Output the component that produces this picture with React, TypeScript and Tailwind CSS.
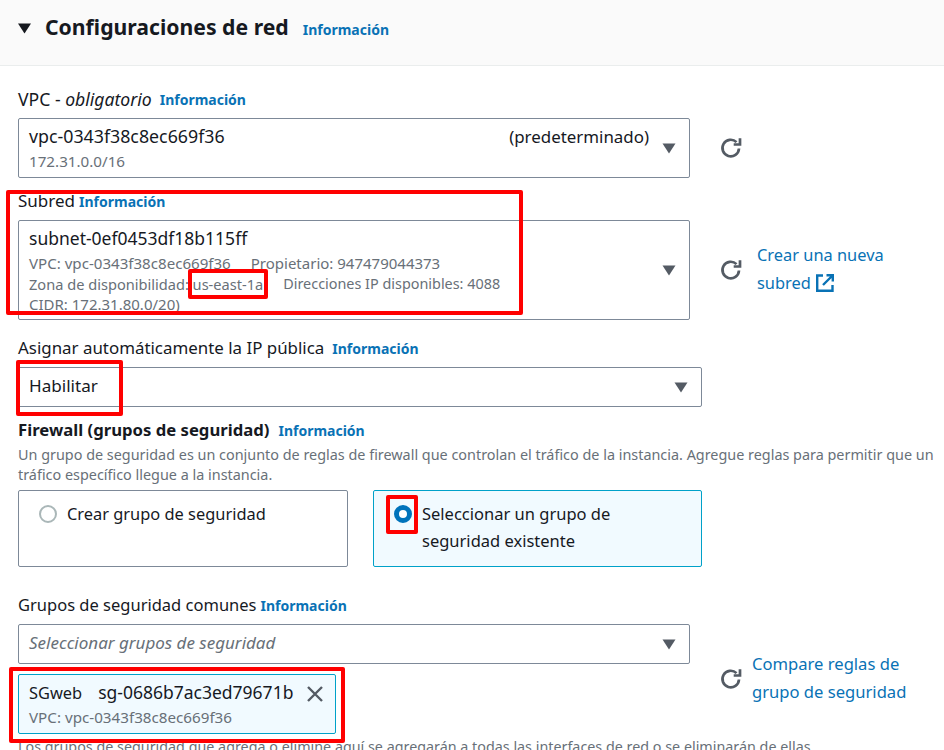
import type { ReactNode } from 'react';

const Info = () => (
  <span className="mt-[2px] text-[14px] font-bold leading-[20px] text-[#0972b5]">Información</span>
);

const Caret = () => (
  <svg width="14" height="11" viewBox="0 0 14 11" className="shrink-0">
    <path d="M0.5 0.5h13L7 10.5z" fill="#545b64" />
  </svg>
);

const Refresh = () => (
  <svg width="22" height="22" viewBox="0 0 22 22" fill="none" className="shrink-0">
    <path d="M19 11.5a8.3 8.3 0 1 1-2.5-6.4" stroke="#545b64" strokeWidth="2.7" />
    <path d="M20 1.2v6.3h-6.3" stroke="#545b64" strokeWidth="2.7" />
  </svg>
);

const External = () => (
  <svg width="18" height="18" viewBox="0 0 18 18" fill="none" className="ml-[1px] inline-block align-[-3px]">
    <path d="M7 1.5H1.2v15.3h15.3V11" stroke="#0972b5" strokeWidth="2.4" />
    <path d="M10.5 1.2h6.3v6.3M16.5 1.5 7 11" stroke="#0972b5" strokeWidth="2.4" />
  </svg>
);

const Field = ({ children, className }: { children: ReactNode; className: string }) => (
  <div className={`flex rounded-[2px] border border-[#7d8998] bg-white ${className}`}>{children}</div>
);

const Overlay = ({ className }: { className: string }) => (
  <div className={`pointer-events-none absolute rounded-[2px] border-[4px] border-[#ff0000] ${className}`} />
);

export default function App() {
  return (
    <div
      className="relative h-[750px] w-[944px] overflow-hidden bg-white text-[16.4px] text-[#16191f]"
      style={{ fontFamily: '"Noto Sans", sans-serif' }}
    >
      {/* header */}
      <div className="flex h-[66px] items-start border-b border-[#eaeded] bg-[#fafafa] pl-[18px] pt-[13px]">
        <svg width="13" height="11" viewBox="0 0 13 11" className="mt-[10px]">
          <path d="M0 0.5h13L6.5 10.5z" fill="#16191f" />
        </svg>
        <span className="ml-[14px] text-[21.2px] font-bold leading-[28px]">Configuraciones de red</span>
        <span className="ml-[14px] mt-[7px] flex">
          <span className="text-[14px] font-bold leading-[20px] text-[#0972b5]">Información</span>
        </span>
      </div>

      <div className="px-[18px]">
        {/* VPC */}
        <div className="mt-[23px] flex h-[20px] items-center gap-[8px] leading-[20px]">
          <span className="text-[17.6px]">
            VPC - <i>obligatorio</i>
          </span>
          <Info />
        </div>
        <div className="mt-[9px] flex items-center">
          <Field className="h-[60px] w-[672px] items-center justify-between pl-[10px] pr-[13px]">
            <div className="flex-1 self-start pt-[5px]">
              <div className="flex justify-between pr-[13px] leading-[25px]">
                <span className="text-[17.8px]">vpc-0343f38c8ec669f36</span>
                <span className="text-[16.9px]">(predeterminado)</span>
              </div>
              <div className="mt-[2px] text-[15.2px] leading-[20px] text-[#687078]">172.31.0.0/16</div>
            </div>
            <Caret />
          </Field>
          <div className="ml-[30px]">
            <Refresh />
          </div>
        </div>

        {/* Subred */}
        <div className="mt-[13px] flex h-[20px] items-center gap-[4px] leading-[20px]">
          <span className="text-[17px]">Subred</span>
          <Info />
        </div>
        <div className="mt-[9px] flex items-center">
          <Field className="h-[100px] w-[672px] items-center justify-between pl-[10px] pr-[13px]">
            <div className="flex-1 self-start pt-[5px]">
              <div className="text-[17.5px] leading-[25px]">subnet-0ef0453df18b115ff</div>
              <div className="mt-[2px] text-[15px] leading-[20.5px] text-[#687078]">
                <div className="flex gap-[20px]">
                  <span className="text-[15.1px]">VPC: vpc-0343f38c8ec669f36</span>
                  <span>Propietario: 947479044373</span>
                </div>
                <div className="flex gap-[20px] text-[14.6px]">
                  <span>Zona de disponibilidad: us-east-1a</span>
                  <span className="text-[14.4px]">Direcciones IP disponibles: 4088</span>
                </div>
                <div>CIDR: 172.31.80.0/20)</div>
              </div>
            </div>
            <Caret />
          </Field>
          <div className="ml-[30px]">
            <Refresh />
          </div>
          <div className="mb-[2px] ml-[15px] leading-[28px] text-[#0972b5]">
            Crear una nueva
            <br />
            subred <External />
          </div>
        </div>

        {/* IP publica */}
        <div className="mt-[18px] flex h-[20px] items-center gap-[8px] leading-[20px]">
          <span className="text-[16.9px]">Asignar automáticamente la IP pública</span>
          <Info />
        </div>
        <Field className="mt-[9px] h-[40px] w-[684px] items-center justify-between pl-[10px] pr-[13px]">
          <span className="pb-[3px] text-[17.1px]">Habilitar</span>
          <Caret />
        </Field>

        {/* Firewall */}
        <div className="mt-[13px] flex h-[20px] items-center gap-[9px] leading-[20px]">
          <span className="text-[16.7px] font-bold">Firewall (grupos de seguridad)</span>
          <Info />
        </div>
        <div className="mt-[5px] w-[920px] text-[14.4px] leading-[20px] text-[#687078]">
          Un grupo de seguridad es un conjunto de reglas de firewall que controlan el tráfico de la instancia. Agregue reglas para permitir que un tráfico específico llegue a la instancia.
        </div>
        <div className="mt-[5px] flex gap-[25px]">
          <div className="flex h-[77px] w-[330px] items-start rounded-[2px] border border-[#7d8998] pl-[20px] pt-[9px]">
            <span className="mt-[5px] h-[18px] w-[18px] shrink-0 rounded-full border-2 border-[#aab7b8]" />
            <span className="ml-[10px] leading-[27px]">Crear grupo de seguridad</span>
          </div>
          <div className="flex h-[77px] w-[329px] items-start rounded-[2px] border border-[#00a1c9] bg-[#f1faff] pl-[20px] pt-[9px]">
            <span className="mt-[5px] h-[18px] w-[18px] shrink-0 rounded-full border-[5px] border-[#0073bb] bg-white" />
            <span className="ml-[10px] text-[16.5px] leading-[27px]">
              Seleccionar un grupo de
              <br />
              seguridad existente
            </span>
          </div>
        </div>

        {/* Grupos */}
        <div className="mt-[28px] flex h-[20px] items-center gap-[4px] leading-[20px]">
          <span className="text-[16.5px]">Grupos de seguridad comunes</span>
          <Info />
        </div>
        <div className="mt-[9px] flex items-start">
          <div>
            <Field className="h-[40px] w-[672px] items-center justify-between pl-[10px] pr-[13px]">
              <i className="pb-[3px] text-[17px] text-[#687078]">Seleccionar grupos de seguridad</i>
              <Caret />
            </Field>
            <div className="mt-[10px] flex h-[60px] w-[318px] items-start justify-between rounded-[2px] border border-[#00a1c9] bg-[#f1faff] pl-[10px] pr-[12px]">
              <div>
                <div className="flex gap-[16px] pt-[5px] leading-[25px]">
                  <span>SGweb</span>
                  <span className="text-[17.5px]">sg-0686b7ac3ed79671b</span>
                </div>
                <div className="mt-[2px] text-[15.2px] leading-[20px] text-[#687078]">VPC: vpc-0343f38c8ec669f36</div>
              </div>
              <svg width="16" height="16" viewBox="0 0 16 16" fill="none" className="mt-[11px] shrink-0">
                <path d="M1 1l14 14M15 1 1 15" stroke="#545b64" strokeWidth="2.4" />
              </svg>
            </div>
          </div>
          <div className="ml-[30px] mt-[44px]">
            <Refresh />
          </div>
          <div className="ml-[10px] mt-[26px] text-[16.6px] leading-[28px] text-[#0972b5]">
            Compare reglas de
            <br />
            grupo de seguridad
          </div>
        </div>

        {/* help text, cut by the bottom of the shot */}
        <div className="mt-[3px] whitespace-nowrap text-[14.33px] leading-[20px] text-[#687078]">
          Los grupos de seguridad que agrega o elimine aquí se agregarán a todas las interfaces de red o se eliminarán de ellas.
        </div>
      </div>

      {/* red annotations */}
      <Overlay className="left-[6px] top-[190px] h-[125px] w-[517px]" />
      <Overlay className="left-[188px] top-[269px] h-[30px] w-[80px]" />
      <Overlay className="left-[16px] top-[360px] h-[56px] w-[107px]" />
      <Overlay className="left-[386px] top-[495px] h-[39px] w-[32px]" />
      <Overlay className="left-[9px] top-[667px] h-[76px] w-[336px]" />
    </div>
  );
}
